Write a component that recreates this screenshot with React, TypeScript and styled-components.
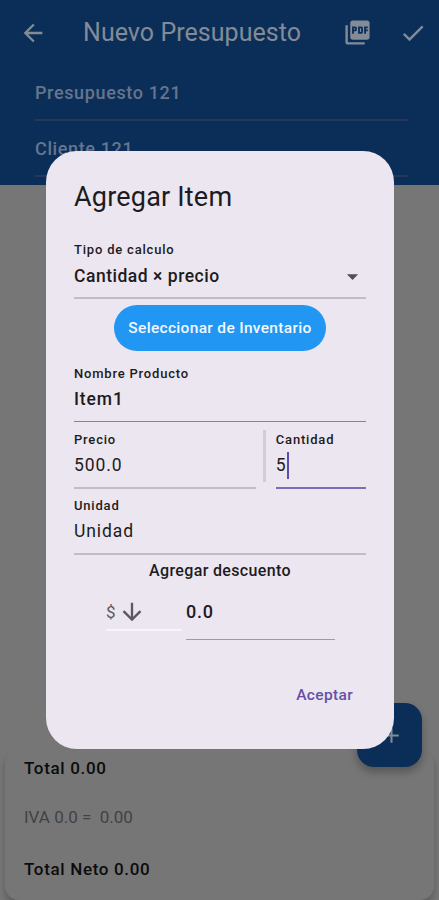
import React from "react";
import styled, { createGlobalStyle } from "styled-components";
import {
  MdAdd,
  MdArrowBack,
  MdArrowDownward,
  MdArrowDropDown,
  MdCheck,
  MdPictureAsPdf,
} from "react-icons/md";

const GlobalStyle = createGlobalStyle`
  * { box-sizing: border-box; }
  body { margin: 0; background: #767676; font-family: Roboto, sans-serif; overflow: hidden; }
  svg { display: block; flex: none; }
`;

const Screen = styled.div`
  position: relative;
  width: 439px;
  height: 900px;
  display: flex;
  flex-direction: column;
  background: #767676;
  overflow: hidden;
`;

const Header = styled.header`
  height: 185px;
  background: #0b2e59;
  color: #828b96;
`;

const AppBar = styled.div`
  height: 65px;
  display: flex;
  align-items: center;
  padding: 0 12px 0 19px;
`;

const AppTitle = styled.h1`
  flex: 1;
  margin: 0 0 0 36px;
  font-size: 25px;
  line-height: 30px;
  font-weight: 400;
  letter-spacing: 0.05px;
  white-space: nowrap;
`;

const Actions = styled.div`
  display: flex;
  align-items: center;
  gap: 27px;
`;

const HeaderField = styled.div`
  height: 56px;
  margin: 0 31px 0 35px;
  padding-top: 17px;
  border-bottom: 2px solid #26385a;
  font-size: 18px;
  line-height: 22px;
  font-weight: 500;
  letter-spacing: 0.63px;
  color: #66758c;
`;

const Body = styled.main`
  flex: 1;
`;

const Summary = styled.section`
  height: 150px;
  margin: 0 5px;
  padding: 7px 19px 0;
  border-radius: 14px;
  background: #767676;
  box-shadow: 0 5px 6px rgba(0, 0, 0, 0.22);
`;

const SummaryRow = styled.div<{ $strong?: boolean }>`
  height: 50.5px;
  font-size: 17px;
  line-height: ${(p) => (p.$strong ? 22 : 19)}px;
  font-weight: ${(p) => (p.$strong ? 500 : 400)};
  letter-spacing: ${(p) => (p.$strong ? 0.66 : 0)}px;
  white-space: pre;
  color: ${(p) => (p.$strong ? "#0c0c0c" : "#424242")};
`;

const Fab = styled.button`
  position: absolute;
  left: 357px;
  top: 703px;
  width: 65px;
  height: 64px;
  padding: 0 0 0 3px;
  border: 0;
  border-radius: 17px;
  background: #0b2e59;
  color: #828b96;
  display: flex;
  align-items: center;
  justify-content: center;
  box-shadow: 0 5px 9px rgba(0, 0, 0, 0.28);
`;

const Dialog = styled.section`
  position: absolute;
  left: 46px;
  top: 151px;
  width: 348px;
  height: 598px;
  padding: 29px 28px 0;
  border-radius: 31px;
  background: #ece6f0;
  color: #1d1b20;
  display: flex;
  flex-direction: column;
`;

const DialogTitle = styled.h2`
  margin: 0 0 28px;
  font-size: 27px;
  line-height: 34px;
  font-weight: 400;
  letter-spacing: 0.2px;
`;

const Field = styled.div<{ $h: number; $line?: string; $thick?: number; $w?: number }>`
  height: ${(p) => p.$h}px;
  width: ${(p) => (p.$w ? `${p.$w}px` : "auto")};
  border-bottom: ${(p) => p.$thick ?? 2.5}px solid ${(p) => p.$line ?? "#c2bcc6"};
`;

const Label = styled.div`
  font-size: 13px;
  line-height: 16px;
  font-weight: 500;
  letter-spacing: 0.8px;
  white-space: nowrap;
`;

const Value = styled.div<{ $w?: number; $ls?: number; $top?: number }>`
  display: flex;
  align-items: center;
  justify-content: space-between;
  margin-top: ${(p) => p.$top ?? 6}px;
  height: 22px;
  font-size: 17.5px;
  line-height: 22px;
  font-weight: ${(p) => p.$w ?? 400};
  letter-spacing: ${(p) => p.$ls ?? 0.9}px;
  white-space: nowrap;
`;

const DropIcon = styled(MdArrowDropDown)`
  color: #514e55;
`;

const InventoryButton = styled.button`
  align-self: center;
  width: 212px;
  height: 46px;
  margin: 6px 0 15px;
  padding: 0;
  border: 0;
  border-radius: 23px;
  background: #2196f3;
  color: #f3f8ff;
  font: 500 15.5px/20px Roboto, sans-serif;
  letter-spacing: 0.32px;
  white-space: nowrap;
`;

const Split = styled.div`
  display: flex;
  margin-top: 10px;
  height: 66px;
`;

const Divider = styled.div`
  width: 3px;
  height: 52px;
  margin: -2px 9.5px 0 7.5px;
  background: #d2ccd6;
`;

const Caret = styled.span`
  width: 2.5px;
  height: 27px;
  background: #5f4baa;
`;

const Typed = styled.div`
  display: flex;
  align-items: center;
`;

const DiscountTitle = styled.div`
  margin-top: 6px;
  text-align: center;
  font-size: 16px;
  line-height: 20px;
  font-weight: 500;
  letter-spacing: 0.35px;
`;

const DiscountRow = styled.div`
  display: flex;
  align-items: flex-start;
  margin: 19px 31px 0 32px;
`;

const Currency = styled.div`
  display: flex;
  align-items: center;
  gap: 2px;
  width: 76px;
  height: 31px;
  padding-bottom: 5px;
  margin-right: 4px;
  border-bottom: 2px solid #f8f4f9;
  font-size: 17px;
  color: #5d5962;
`;

const Amount = styled.div`
  width: 149px;
  height: 40px;
  border-bottom: 1.5px solid #a09aa4;
  font-size: 18px;
  line-height: 23px;
  font-weight: 500;
  letter-spacing: 0.8px;
`;

const Accept = styled.button`
  align-self: flex-end;
  margin: 45px 13px 0 0;
  padding: 0;
  border: 0;
  background: none;
  color: #6550a5;
  font: 500 15.5px/20px Roboto, sans-serif;
  letter-spacing: 0.35px;
`;

export default function App() {
  return (
    <Screen>
      <GlobalStyle />
      <Header>
        <AppBar>
          <MdArrowBack size={28} />
          <AppTitle>Nuevo Presupuesto</AppTitle>
          <Actions>
            <MdPictureAsPdf size={29} />
            <MdCheck size={28} />
          </Actions>
        </AppBar>
        <HeaderField>Presupuesto 121</HeaderField>
        <HeaderField>Cliente 121</HeaderField>
      </Header>
      <Body />
      <Summary>
        <SummaryRow $strong>Total 0.00</SummaryRow>
        <SummaryRow>{"IVA 0.0 =  0.00"}</SummaryRow>
        <SummaryRow $strong>Total Neto 0.00</SummaryRow>
      </Summary>
      <Fab aria-label="Agregar">
        <MdAdd size={25} />
      </Fab>
      <Dialog role="dialog">
        <DialogTitle>Agregar Item</DialogTitle>
        <Field $h={57}>
          <Label>Tipo de calculo</Label>
          <Value $w={500} $ls={0.52} $top={7}>
            Cantidad × precio
            <DropIcon size={27} />
          </Value>
        </Field>
        <InventoryButton>Seleccionar de Inventario</InventoryButton>
        <Field $h={56} $thick={1} $line="#88838c">
          <Label>Nombre Producto</Label>
          <Value $w={500}>Item1</Value>
        </Field>
        <Split>
          <Field $h={57} $w={182.5}>
            <Label>Precio</Label>
            <Value>500.0</Value>
          </Field>
          <Divider />
          <Field $h={57} $w={90.5} $line="#7f6cb8">
            <Label>Cantidad</Label>
            <Value>
              <Typed>
                5<Caret />
              </Typed>
            </Value>
          </Field>
        </Split>
        <Field $h={57}>
          <Label>Unidad</Label>
          <Value>Unidad</Value>
        </Field>
        <DiscountTitle>Agregar descuento</DiscountTitle>
        <DiscountRow>
          <Currency>
            $<MdArrowDownward size={28} />
          </Currency>
          <Amount>0.0</Amount>
        </DiscountRow>
        <Accept>Aceptar</Accept>
      </Dialog>
    </Screen>
  );
}
